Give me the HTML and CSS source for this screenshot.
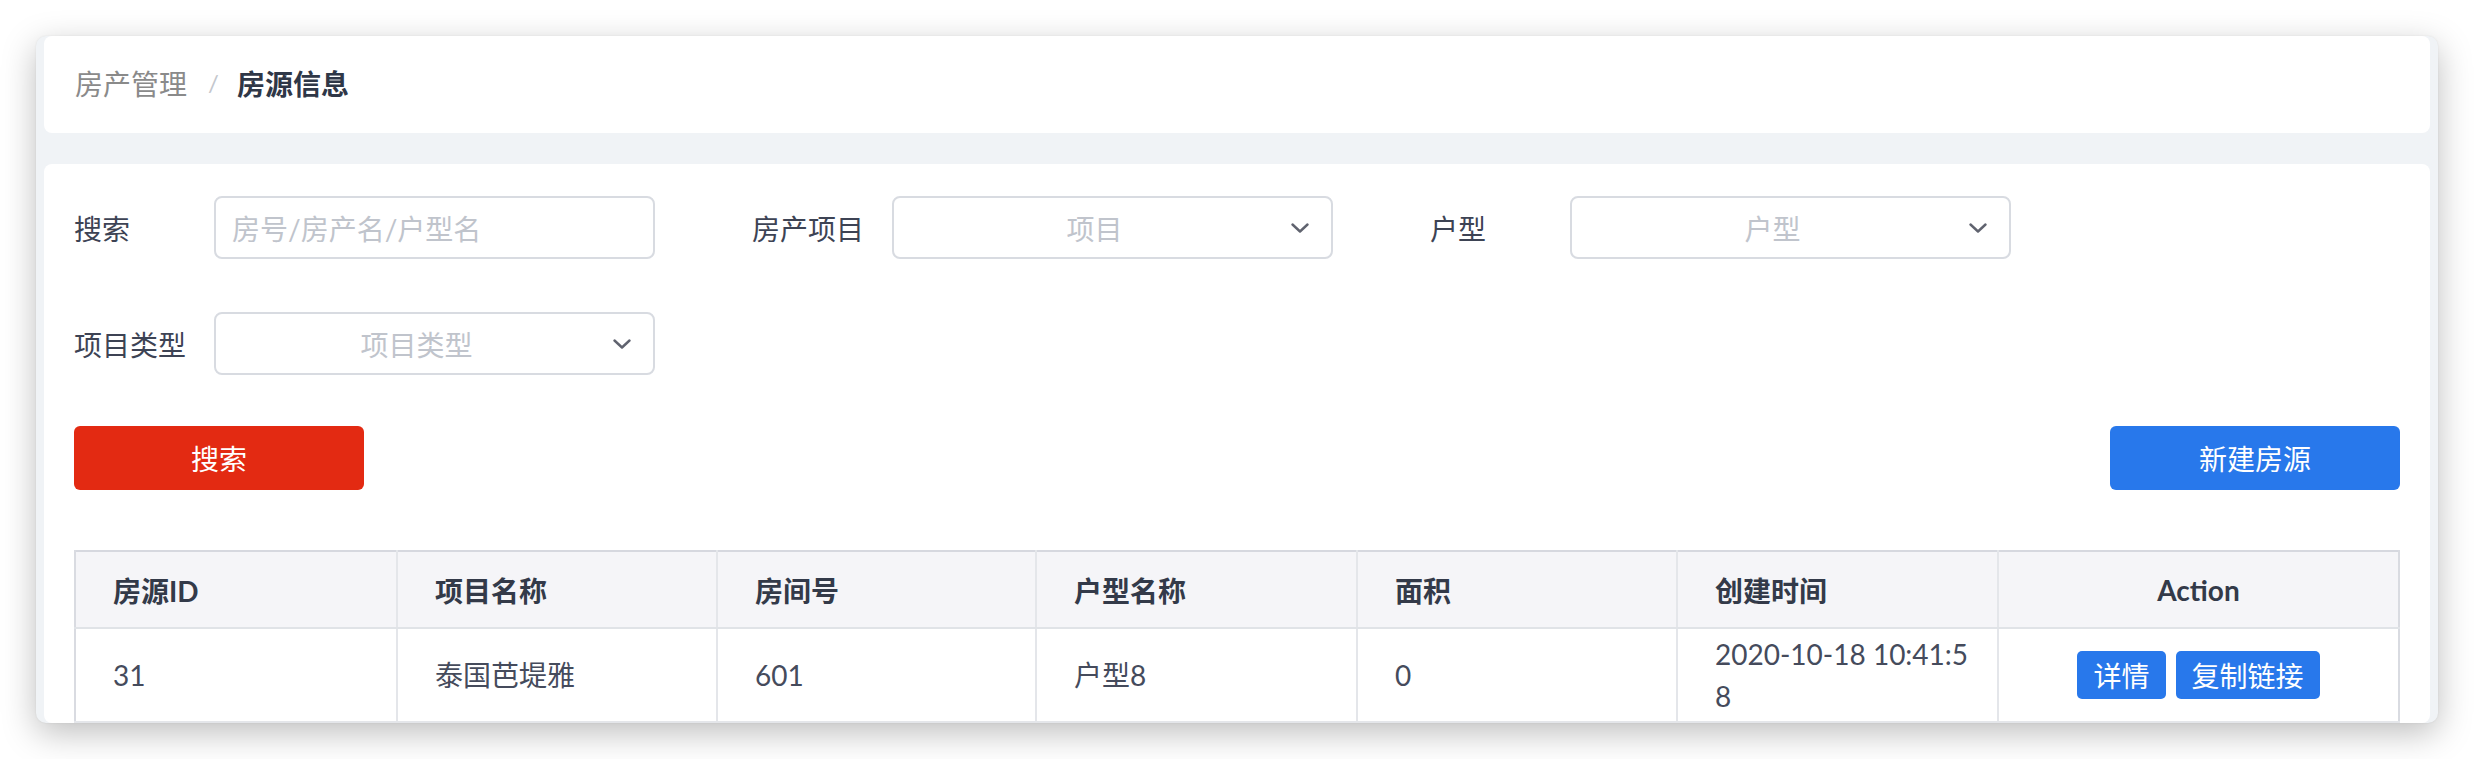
FILE: index.html
```html
<!DOCTYPE html>
<html lang="zh-CN">
<head>
<meta charset="utf-8">
<title>房源信息</title>
<link rel="stylesheet" href="styles.css">
</head>
<body>
<div class="window">
  <div class="card crumbs">
    <span class="crumb">房产管理</span>
    <span class="sep">/</span>
    <span class="crumb current">房源信息</span>
  </div>
  <div class="card main">
    <div class="form">
      <div class="field">
        <span class="label">搜索</span>
        <div class="input"><span class="ph">房号/房产名/户型名</span></div>
      </div>
      <div class="field">
        <span class="label">房产项目</span>
        <div class="input select"><span class="ph">项目</span>
          <svg class="arrow" viewBox="0 0 18 10" width="18" height="10"><path d="M1.5 1.5 L9 8.5 L16.5 1.5" fill="none" stroke="#60636f" stroke-width="2.4" stroke-linecap="round" stroke-linejoin="round"/></svg>
        </div>
      </div>
      <div class="field">
        <span class="label">户型</span>
        <div class="input select"><span class="ph">户型</span>
          <svg class="arrow" viewBox="0 0 18 10" width="18" height="10"><path d="M1.5 1.5 L9 8.5 L16.5 1.5" fill="none" stroke="#60636f" stroke-width="2.4" stroke-linecap="round" stroke-linejoin="round"/></svg>
        </div>
      </div>
      <div class="field">
        <span class="label">项目类型</span>
        <div class="input select"><span class="ph">项目类型</span>
          <svg class="arrow" viewBox="0 0 18 10" width="18" height="10"><path d="M1.5 1.5 L9 8.5 L16.5 1.5" fill="none" stroke="#60636f" stroke-width="2.4" stroke-linecap="round" stroke-linejoin="round"/></svg>
        </div>
      </div>
    </div>
    <div class="actions">
      <button class="btn btn-red">搜索</button>
      <button class="btn btn-blue">新建房源</button>
    </div>
    <table class="grid">
      <colgroup>
        <col class="c1"><col class="c2"><col class="c3"><col class="c4"><col class="c5"><col class="c6"><col>
      </colgroup>
      <thead>
        <tr>
          <th>房源ID</th>
          <th>项目名称</th>
          <th>房间号</th>
          <th>户型名称</th>
          <th>面积</th>
          <th>创建时间</th>
          <th class="center">Action</th>
        </tr>
      </thead>
      <tbody>
        <tr>
          <td>31</td>
          <td>泰国芭堤雅</td>
          <td>601</td>
          <td>户型8</td>
          <td>0</td>
          <td class="date">2020-10-18 10:41:58</td>
          <td class="center"><button class="mini">详情</button><button class="mini">复制链接</button></td>
        </tr>
      </tbody>
    </table>
  </div>
</div>
</body>
</html>
```
FILE: styles.css
```css
* { box-sizing: border-box; }
html, body { margin: 0; padding: 0; background: #ffffff; }
body {
  font-family: Lato, "Noto Sans CJK SC", sans-serif;
  font-size: 28px;
  color: #3d4354;
}
.window {
  margin: 36px;
  height: 687px;
  overflow: hidden;
  border-radius: 10px;
  background: #f0f3f6;
  padding: 0 8px;
  display: flex;
  flex-direction: column;
  gap: 31px;
  box-shadow: 0 10px 34px rgba(0, 0, 0, 0.26), 0 0 2px rgba(0,0,0,0.08);
}
.card {
  background: #ffffff;
  border-radius: 8px;
}
.crumbs {
  height: 97px;
  flex: none;
  display: flex;
  align-items: center;
  padding: 0 0 4px 31px;
}
.crumb { color: #8a8a8a; }
.crumb.current { color: #2f3747; font-weight: 700; }
.sep { color: #c4c7cd; margin: 0 18px 0 21px; font-size: 24px; }
.main {
  flex: 1;
  padding: 32px 30px 0 30px;
}
.form {
  display: flex;
  flex-wrap: wrap;
  column-gap: 97px;
  row-gap: 53px;
}
.field {
  width: 581px;
  display: flex;
  align-items: center;
}
.label {
  width: 140px;
  flex: none;
  color: #3d4354;
}
.input {
  width: 441px;
  height: 63px;
  border: 2px solid #d8dbe1;
  border-radius: 8px;
  background: #fff;
  display: flex;
  align-items: center;
  padding: 0 16px;
}
.ph { color: #c0c4cc; white-space: nowrap; }
.select { padding: 0 22px 0 16px; }
.select .ph { flex: 1; text-align: center; }
.arrow { flex: none; margin-left: 12px; display: block; }
.actions {
  display: flex;
  justify-content: space-between;
  margin-top: 51px;
}
.btn {
  width: 290px;
  height: 64px;
  border: none;
  border-radius: 6px;
  color: #fff;
  font-family: inherit;
  font-size: 28px;
  padding: 0;
}
.btn-red { background: #e32a12; }
.btn-blue { background: #2878eb; }
.grid {
  margin-top: 60px;
  width: 100%;
  border-collapse: collapse;
  table-layout: fixed;
  border-top: 2px solid #d6d8df;
}
.c1 { width: 322px; }
.c2 { width: 320px; }
.c3 { width: 319px; }
.c4 { width: 321px; }
.c5 { width: 320px; }
.c6 { width: 321px; }
.grid th, .grid td {
  border: 2px solid #e4e6ea;
  text-align: left;
  vertical-align: middle;
}
.grid tr > :first-child { border-left-color: #d9dbe1; }
.grid tr > :last-child { border-right-color: #d9dbe1; }
.grid th {
  height: 77px;
  background: #f5f5f8;
  color: #333a49;
  font-weight: 700;
  padding: 0 37px;
  border-top: none;
  border-bottom-color: #e0e3e7;
}
.grid td {
  color: #454b5c;
  padding: 4px 37px;
  line-height: 42px;
}
.grid td.date {
  word-break: break-all;
  padding-right: 18px;
}
.grid .center { text-align: center; }
.mini {
  height: 48px;
  border: none;
  border-radius: 5px;
  background: #2878eb;
  color: #fff;
  font-family: inherit;
  font-size: 28px;
  padding: 0 16px;
  margin: 0 5px;
  vertical-align: middle;
}
```
